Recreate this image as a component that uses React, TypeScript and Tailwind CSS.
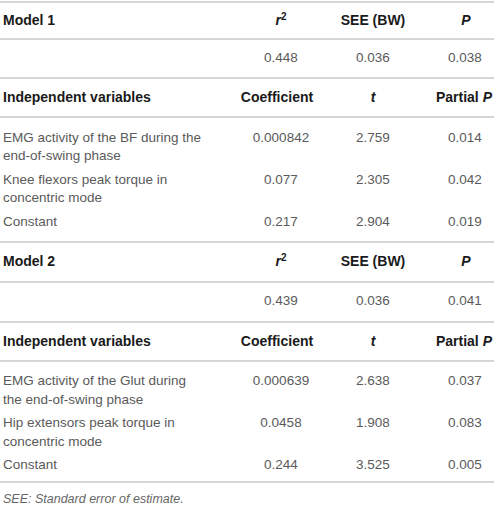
import React from 'react';

const GRID = 'grid grid-cols-[232px_94px_94px_74px] items-center';
const LINE = 'border-b-2 border-[#d6d6d6]';

type DataRow = { label: string[]; coef: string; t: string; p: string };

const MODELS = [
  {
    name: 'Model 1',
    r2: '0.448',
    see: '0.036',
    p: '0.038',
    rows: [
      { label: ['EMG activity of the BF during the', 'end-of-swing phase'], coef: '0.000842', t: '2.759', p: '0.014' },
      { label: ['Knee flexors peak torque in', 'concentric mode'], coef: '0.077', t: '2.305', p: '0.042' },
      { label: ['Constant'], coef: '0.217', t: '2.904', p: '0.019' },
    ] as DataRow[],
  },
  {
    name: 'Model 2',
    r2: '0.439',
    see: '0.036',
    p: '0.041',
    rows: [
      { label: ['EMG activity of the Glut during', 'the end-of-swing phase'], coef: '0.000639', t: '2.638', p: '0.037' },
      { label: ['Hip extensors peak torque in', 'concentric mode'], coef: '0.0458', t: '1.908', p: '0.083' },
      { label: ['Constant'], coef: '0.244', t: '3.525', p: '0.005' },
    ] as DataRow[],
  },
];

function ModelBlock({ model, first }: { model: (typeof MODELS)[number]; first: boolean }) {
  return (
    <div>
      {/* Model header */}
      <div className={`${GRID} ${LINE} ${first ? 'h-[37px]' : 'h-[40px]'} font-bold text-[14px] text-[#1a1a1a]`}>
        <div className="pl-[3px]">{model.name}</div>
        <div className="text-center pl-[4px]">
          <i>r</i>
          <sup className="text-[10px]">2</sup>
        </div>
        <div className="text-center">SEE (BW)</div>
        <div className="text-center pl-[18px]">
          <i>P</i>
        </div>
      </div>

      {/* Model fit values */}
      <div className={`${GRID} ${LINE} ${first ? 'h-[39px]' : 'h-[40px]'} text-[#5a5a5a]`}>
        <div />
        <div className="text-center pl-[4px]">{model.r2}</div>
        <div className="text-center">{model.see}</div>
        <div className="text-center pl-[16px]">{model.p}</div>
      </div>

      {/* Coefficients header */}
      <div className={`${GRID} ${LINE} h-[39px] font-bold text-[14px] text-[#1a1a1a]`}>
        <div className="pl-[3px]">Independent variables</div>
        <div className="text-center pr-[4px] whitespace-nowrap">Coefficient</div>
        <div className="text-center">
          <i>t</i>
        </div>
        <div className="text-right pr-[2px] whitespace-nowrap">
          Partial <i>P</i>
        </div>
      </div>

      {/* Coefficient rows */}
      <div className={`${LINE} pt-[8px] ${first ? 'pb-[7px]' : 'pb-[4px]'} text-[#5a5a5a] leading-[18.5px]`}>
        {model.rows.map((row, i) => (
          <div key={i} className="grid grid-cols-[232px_94px_94px_74px] items-start py-[2.5px]">
            <div className="pl-[3px]">
              {row.label.map((l, j) => (
                <div key={j} className="whitespace-nowrap">{l}</div>
              ))}
            </div>
            <div className="text-center pl-[4px]">{row.coef}</div>
            <div className="text-center">{row.t}</div>
            <div className="text-center pl-[16px]">{row.p}</div>
          </div>
        ))}
      </div>
    </div>
  );
}

export default function App() {
  return (
    <div className="w-[494px] h-[506px] bg-white overflow-hidden font-['Liberation_Sans',Arial,sans-serif] text-[13.5px]">
      <div className="mt-[1px] border-t-2 border-[#d6d6d6]">
        {MODELS.map((m, i) => (
          <ModelBlock key={m.name} model={m} first={i === 0} />
        ))}
      </div>
      <p className="pl-[3px] pt-[9px] text-[12.5px] leading-[14px] italic text-[#666]">SEE: Standard error of estimate.</p>
    </div>
  );
}
